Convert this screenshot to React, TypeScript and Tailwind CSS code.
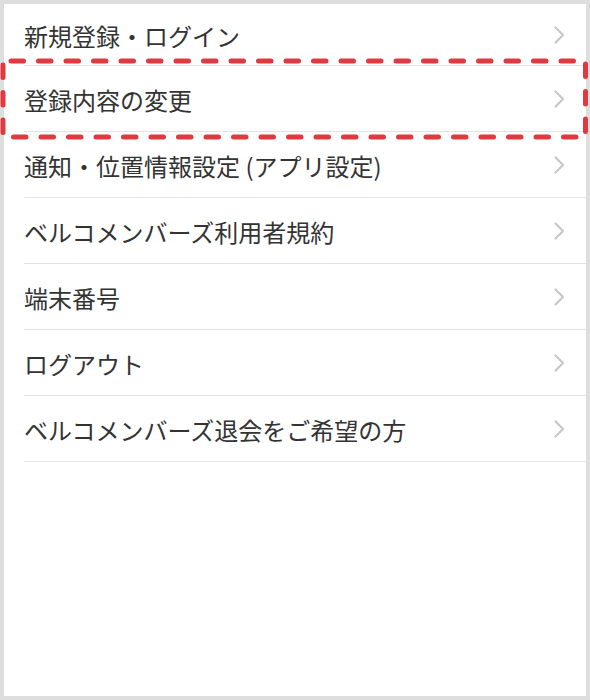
const items = [
  "新規登録・ログイン",
  "登録内容の変更",
  "通知・位置情報設定 (アプリ設定)",
  "ベルコメンバーズ利用者規約",
  "端末番号",
  "ログアウト",
  "ベルコメンバーズ退会をご希望の方",
];

function Chevron() {
  return (
    <svg width="14" height="20" viewBox="0 0 14 20" className="shrink-0">
      <path
        d="M3.5 2.5 L11 10 L3.5 17.5"
        fill="none"
        stroke="#c7c7cc"
        strokeWidth="2.2"
        strokeLinecap="round"
        strokeLinejoin="round"
      />
    </svg>
  );
}

export default function App() {
  return (
    <div
      className="relative h-[700px] w-[590px] bg-[#dedede] p-1"
      style={{ fontFamily: '"Noto Sans CJK JP", "Noto Sans", sans-serif' }}
    >
      <div className="h-full w-full bg-white">
        <ul className="pl-5">
          {items.map((label, idx) => (
            <li
              key={label}
              className={`flex items-center justify-between border-b border-[#e3e3e3] pr-5 ${
                idx === 0 ? "h-[62px]" : "h-[66px]"
              }`}
            >
              <span className="pt-[2px] text-[24px] font-normal leading-none text-[#333333]">
                {label}
              </span>
              <Chevron />
            </li>
          ))}
        </ul>
      </div>

      {/* highlight around the second row */}
      <svg
        width="590"
        height="84"
        className="pointer-events-none absolute left-0 top-[57px]"
      >
        <rect
          x="3"
          y="4"
          width="582.5"
          height="76"
          fill="none"
          stroke="#e0393f"
          strokeWidth="5"
          strokeLinecap="round"
          strokeDasharray="12.5 15"
          strokeDashoffset="-8"
        />
      </svg>
    </div>
  );
}
